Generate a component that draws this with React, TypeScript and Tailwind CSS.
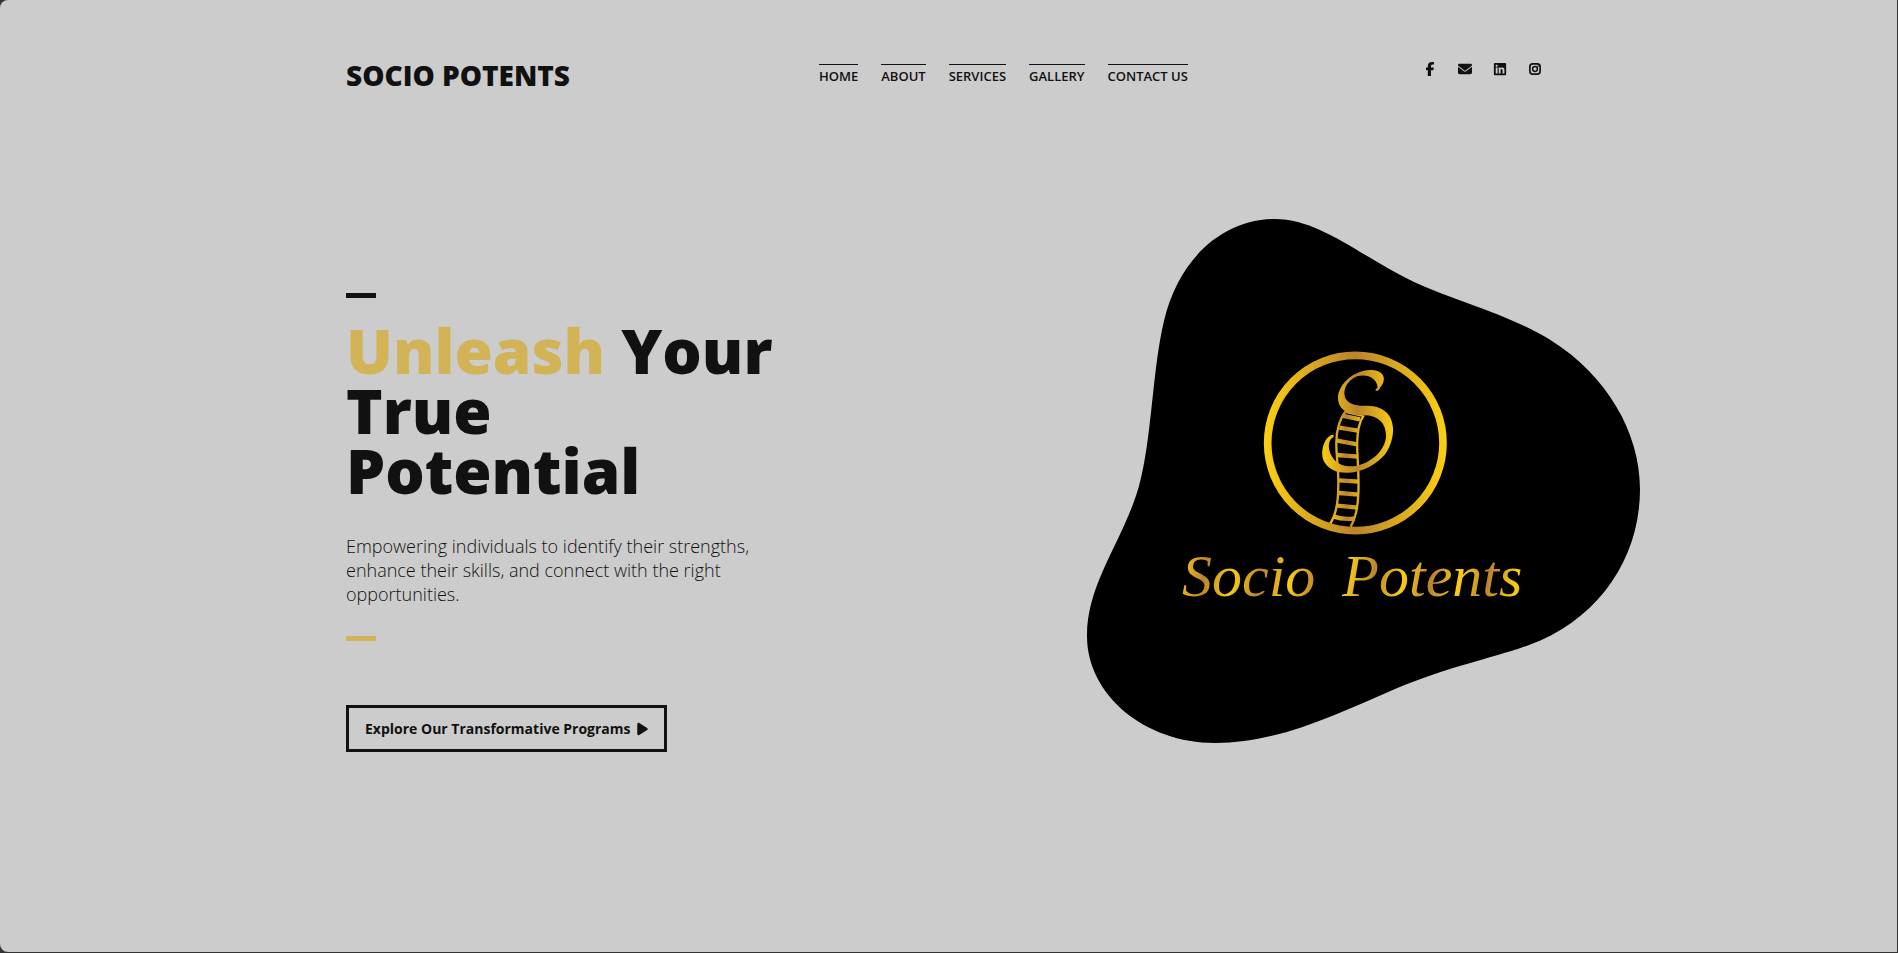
import { FaEnvelope, FaFacebookF, FaLinkedin, FaPlay } from "react-icons/fa6";

const navItems = ["Home", "About", "Services", "Gallery", "Contact Us"];

function InstagramIcon() {
  return (
    <svg viewBox="0 0 14 14" width="1em" height="1em" fill="none" stroke="currentColor">
      <rect x="1.9" y="1.9" width="10.2" height="10.2" rx="2.9" strokeWidth="1.7" />
      <circle cx="7" cy="7" r="2.4" strokeWidth="1.5" />
      <circle cx="10" cy="4" r="0.8" fill="currentColor" stroke="none" />
    </svg>
  );
}

const socials = [
  { label: "Facebook", Icon: FaFacebookF },
  { label: "Email", Icon: FaEnvelope },
  { label: "LinkedIn", Icon: FaLinkedin },
  { label: "Instagram", Icon: InstagramIcon },
];

function Header() {
  return (
    <header className="grid grid-cols-[473px_1fr_auto] items-start pt-14">
      <a href="#" className="text-[28px] leading-[38px] font-extrabold uppercase">
        Socio Potents
      </a>
      <nav aria-label="Main" className="pt-2">
        <ul className="flex gap-[23px]">
          {navItems.map((item) => (
            <li key={item}>
              <a
                href="#"
                className="block border-t border-[#111] pt-0.5 text-[13px] leading-[18px] font-semibold whitespace-nowrap uppercase"
              >
                {item}
              </a>
            </li>
          ))}
        </ul>
      </nav>
      <ul className="flex gap-[21px] pt-1.5 pr-[9px]">
        {socials.map(({ label, Icon }) => (
          <li key={label}>
            <a href="#" aria-label={label} className="block text-[14px]">
              <Icon />
            </a>
          </li>
        ))}
      </ul>
    </header>
  );
}

function Emblem() {
  return (
    <svg x="153" y="121" width="230" height="200" viewBox="0 0 690 600">
      <circle cx="346" cy="309" r="263" fill="none" stroke="url(#ring)" strokeWidth="23" />
      <g fill="none" stroke="url(#ladder)">
        <path d="M319 211C298 238 288 275 289 315C290 355 295 385 295 425C296 485 288 525 271 550" strokeWidth="7" />
        <path d="M371 226C354 250 350 295 352 335C354 380 357 420 355 460C354 505 346 535 332 560" strokeWidth="7" />
        <path d="M318 217L366 228" strokeWidth="5" />
        <path
          d="M306 227L360 238M298 263L353 272M291 302L352 313M292 345L353 350M297 421L357 425M297 459L356 464M292 497L353 503M281 530Q310 540 344 535"
          strokeWidth="13"
        />
      </g>
      <path
        fill="url(#letter)"
        d="M407 152C413 154 417 149 420 143C430 132 433 121 431 111C427 95 410 90 388 90C345 91 296 130 294 172C293 203 315 224 360 226C412 222 439 246 438 290C435 332 394 365 358 375C335 383 304 378 289 365C270 349 260 318 271 300C275 293 284 292 281 286C275 280 262 293 257 301C245 322 243 349 253 366C268 391 293 399 325 398C369 396 411 371 434 344C451 322 461 289 459 263C456 224 432 198 382 197C350 199 324 192 316 174C307 150 321 126 341 114C360 103 386 105 400 117C411 127 414 139 412 145C408 146 406 149 407 152Z"
      />
    </svg>
  );
}

function BrandBlob() {
  return (
    <div className="relative -mr-[89px] w-[553px] shrink-0">
      <svg viewBox="0 0 553 524" className="block w-full" role="img" aria-label="Socio Potents emblem">
        <defs>
          <linearGradient id="ring">
            <stop offset="0" stopColor="#f9cd12" />
            <stop offset="0.5" stopColor="#bb842c" />
            <stop offset="1" stopColor="#f9cd12" />
          </linearGradient>
          <linearGradient id="letter">
            <stop offset="0" stopColor="#f9cd12" />
            <stop offset="0.5" stopColor="#bb842c" />
            <stop offset="1" stopColor="#f9cd12" />
          </linearGradient>
          <linearGradient id="ladder" gradientUnits="userSpaceOnUse" x1="271" y1="0" x2="371" y2="0">
            <stop offset="0" stopColor="#f2c318" />
            <stop offset="0.5" stopColor="#bb842c" />
            <stop offset="1" stopColor="#f2c318" />
          </linearGradient>
        </defs>
        <path d="M188 0C233 0 273 37 327 63C370 83 422 95 465 122C519 156 553 213 553 270C553 340 511 401 442 426C404 440 366 446 308 470C250 495 192 524 128 524C58 524 0 476 0 417C0 363 36 323 52 267C65 220 65 152 77 102C91 42 134 0 188 0Z" />
        <Emblem />
      </svg>
      <p className="absolute top-[321px] left-[95px] bg-[repeating-linear-gradient(100deg,#f9cd12_0px,#bb842c_28px,#f9cd12_56px)] bg-clip-text pr-2 font-['Liberation_Serif',serif] text-[60px] leading-[72px] whitespace-nowrap text-transparent italic">
        Socio <span className="ml-3">Potents</span>
      </p>
    </div>
  );
}

function Hero() {
  return (
    <main className="flex items-start justify-between pt-[125px] pb-16">
      <section className="w-[440px] pt-[74px]">
        <div className="h-[5px] w-[30px] bg-[#111]" />
        <h1 className="mt-[22px] text-[62px] leading-[60px] font-extrabold">
          <span className="text-[#d2b356]">Unleash</span> Your
          <br />
          True
          <br />
          Potential
        </h1>
        <p className="mt-[34px] text-[18px] leading-6 font-light">
          Empowering individuals to identify their strengths, enhance their skills, and connect with the right
          opportunities.
        </p>
        <div className="mt-[30px] h-[5px] w-[30px] bg-[#d2b356]" />
        <a
          href="#"
          className="mt-16 inline-flex items-center gap-1.5 border-3 border-[#111] px-4 py-2.5 text-[14px] leading-[21px] font-bold whitespace-nowrap"
        >
          Explore Our Transformative Programs
          <FaPlay className="h-3.5 w-[11px]" />
        </a>
      </section>
      <BrandBlob />
    </main>
  );
}

export default function App() {
  return (
    <div className="flex min-h-screen bg-[#333] pr-px pb-px font-['Open_Sans',sans-serif] text-[#111]">
      <div className="grow overflow-hidden rounded-l-lg bg-[#ccc]">
        <div className="mx-auto max-w-[1205px]">
          <Header />
          <Hero />
        </div>
      </div>
    </div>
  );
}
